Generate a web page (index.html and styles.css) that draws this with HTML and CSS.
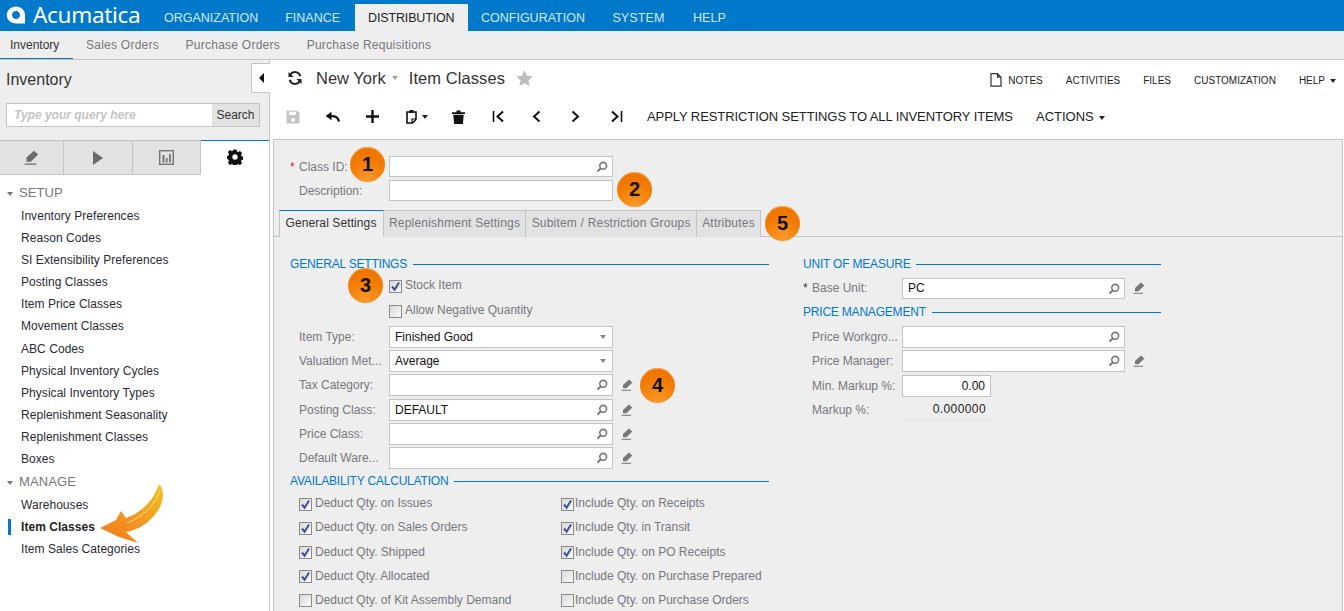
FILE: index.html
```html
<!DOCTYPE html>
<html>
<head>
<meta charset="utf-8">
<title>Item Classes</title>
<link rel="stylesheet" href="styles.css">
</head>
<body>
<svg class="defs" width="0" height="0">
 <defs>
  <symbol id="i-search" viewBox="0 0 12 12"><circle cx="7.2" cy="4.8" r="3.4" fill="none" stroke="currentColor" stroke-width="1.6"/><path d="M4.8 7.2L1.4 10.6" stroke="currentColor" stroke-width="2" fill="none"/></symbol>
  <symbol id="i-pencil" viewBox="0 0 12 12"><path d="M8 .5l3.300 3-5.800 5.800H2V6z" fill="currentColor"/><path d="M.5 11.300h9.500" stroke="currentColor" stroke-width="1" fill="none"/></symbol>
  <symbol id="i-check" viewBox="0 0 11 11"><path d="M2 5.500l2.600 3.200L9 1.400" fill="none" stroke="#3f4f9a" stroke-width="2"/></symbol>
  <linearGradient id="arrow-fill" x1="1" y1="0" x2="0" y2="1"><stop offset="0" stop-color="#f2c21e"/><stop offset=".55" stop-color="#f39422"/><stop offset="1" stop-color="#f07a1c"/></linearGradient>
 </defs>
</svg>

<div class="topbar">
 <div class="logo">
  <svg width="20" height="18" viewBox="0 0 20 18"><path fill-rule="evenodd" d="M10 .5c5 0 9 3.600 9 8.400v8.600H10C4.700 17.500.8 13.700.8 9 .8 4.300 4.800.5 10 .5zM10 5c-2.300 0-4 1.800-4 4s1.700 4 4 4 4-1.800 4-4-1.700-4-4-4z" fill="#fff"/></svg>
  <span class="logo-text">Acumatica</span>
 </div>
 <a class="top-item">ORGANIZATION</a>
 <a class="top-item">FINANCE</a>
 <a class="top-item active">DISTRIBUTION</a>
 <a class="top-item">CONFIGURATION</a>
 <a class="top-item">SYSTEM</a>
 <a class="top-item">HELP</a>
</div>

<div class="subbar">
 <a class="sub-item active">Inventory</a>
 <a class="sub-item">Sales Orders</a>
 <a class="sub-item">Purchase Orders</a>
 <a class="sub-item">Purchase Requisitions</a>
</div>

<div class="body-row">
 <div class="sidebar">
  <div class="side-top">
   <div class="side-title">Inventory</div>
   <div class="side-search">
    <span class="query">Type your query here</span>
    <span class="search-btn">Search</span>
   </div>
  </div>
  <div class="side-tabs">
   <div class="side-tab t1"><svg width="15" height="15" class="ic-gray"><use href="#i-pencil"/></svg></div>
   <div class="side-tab t2"><svg width="12" height="16" viewBox="0 0 12 16"><path d="M1 1l10 7-10 7z" fill="#6b6b6b"/></svg></div>
   <div class="side-tab t3"><svg width="15" height="15" viewBox="0 0 15 15"><rect x=".7" y=".7" width="13.600" height="13.600" fill="none" stroke="#777" stroke-width="1.400"/><path d="M3.500 5h2v7.500h-2zM6.800 8h1.800v4.500H6.800zM10 4h1.800v8.500H10z" fill="#777"/></svg></div>
   <div class="side-tab t4 active"><svg width="16" height="16" viewBox="0 0 16 16"><path fill-rule="evenodd" d="M6.500.5h3l.4 2 1.300.6 1.800-1.100 2.100 2.100-1.100 1.800.6 1.300 1.900.4v3l-1.900.4-.6 1.300 1.100 1.800-2.100 2.100-1.800-1.100-1.300.6-.4 1.800h-3l-.4-1.800-1.300-.6-1.800 1.100L.9 13.500l1.100-1.800-.6-1.300-1.900-.4v-3l1.900-.4.6-1.300L.9 3.100 3 1l1.800 1.100 1.300-.6zM8 5.300a2.700 2.700 0 1 0 0 5.400 2.700 2.700 0 0 0 0-5.400z" fill="#111"/></svg></div>
  </div>
  <div class="tree">
   <div class="tree-head"><i class="caret"></i>SETUP</div>
   <a class="tree-item">Inventory Preferences</a>
   <a class="tree-item">Reason Codes</a>
   <a class="tree-item">SI Extensibility Preferences</a>
   <a class="tree-item">Posting Classes</a>
   <a class="tree-item">Item Price Classes</a>
   <a class="tree-item">Movement Classes</a>
   <a class="tree-item">ABC Codes</a>
   <a class="tree-item">Physical Inventory Cycles</a>
   <a class="tree-item">Physical Inventory Types</a>
   <a class="tree-item">Replenishment Seasonality</a>
   <a class="tree-item">Replenishment Classes</a>
   <a class="tree-item">Boxes</a>
   <div class="tree-head"><i class="caret"></i>MANAGE</div>
   <a class="tree-item">Warehouses</a>
   <a class="tree-item current">Item Classes</a>
   <a class="tree-item">Item Sales Categories</a>
  </div>
 </div>

 <div class="main">
  <div class="title-row">
   <svg class="reload" width="16" height="16" viewBox="0 0 16 16"><path d="M13.300 6.300A5.500 5.500 0 0 0 3.300 4.600M2.700 9.700a5.500 5.500 0 0 0 10 1.700" fill="none" stroke="#222" stroke-width="2"/><path d="M1.500 2v5h5zM14.500 14V9h-5z" fill="#222"/></svg>
   <span class="company">New York</span><i class="caret title-caret"></i>
   <span class="screen">Item Classes</span>
   <svg class="star" width="17" height="16" viewBox="0 0 17 16"><path d="M8.500.5l2.500 5.200 5.600.7-4.100 3.900 1.100 5.700-5.100-2.800-5.100 2.800 1.100-5.700L.4 6.400 6 5.700z" fill="#bdbdbd"/></svg>
   <div class="title-links">
    <svg width="12" height="14" viewBox="0 0 12 14"><path d="M1 .7h6.500L11 4.200v9H1z M7.500.7v3.500H11" fill="none" stroke="#333" stroke-width="1.200"/></svg>
    <a class="link notes">NOTES</a>
    <a class="link">ACTIVITIES</a>
    <a class="link">FILES</a>
    <a class="link">CUSTOMIZATION</a>
    <a class="link">HELP<i class="caret dark"></i></a>
   </div>
  </div>
  <div class="toolbar">
   <svg class="tb t-save" width="14" height="14" viewBox="0 0 14 14"><path fill-rule="evenodd" d="M.5.500h10.500l2.500 2.500v10.500H.5zM3 1.800v3.200h7V1.800zM7 8a2 2 0 1 0 0 4 2 2 0 0 0 0-4z" fill="#c4c4c4"/></svg>
   <svg class="tb t-undo" width="15" height="11" viewBox="0 0 15 11"><path d="M14 10.500C13 6.500 9.500 4.800 5.500 5.300" fill="none" stroke="#111" stroke-width="2.200"/><path d="M6.500.8v8.500L.6 5z" fill="#111"/></svg>
   <svg class="tb t-plus" width="13" height="13" viewBox="0 0 13 13"><path d="M6.500 0v13M0 6.500h13" stroke="#111" stroke-width="2.400" fill="none"/></svg>
   <svg class="tb t-clip" width="11" height="15" viewBox="0 0 11 15"><path d="M1 3h9v7.500L6.500 14H1z" fill="none" stroke="#111" stroke-width="1.600"/><path d="M3.500 1h4v3h-4z" fill="#111"/><path d="M6 14v-4h4" fill="none" stroke="#111" stroke-width="1.200"/></svg>
   <i class="caret dark t-clip-caret"></i>
   <svg class="tb t-del" width="13" height="14" viewBox="0 0 13 14"><path d="M0 2.200h4.500V.6h4v1.600H13v1.700H0zM1.300 4.800h10.400l-.8 9.200H2.100z" fill="#111"/></svg>
   <svg class="tb t-first" width="13" height="13" viewBox="0 0 13 13"><path d="M1.500 1v11" stroke="#111" stroke-width="1.600" fill="none"/><path d="M11 1.500L5.500 6.500l5.500 5" stroke="#111" stroke-width="2" fill="none"/></svg>
   <svg class="tb t-prev" width="9" height="13" viewBox="0 0 9 13"><path d="M7.500 1.500L2 6.500l5.500 5" stroke="#111" stroke-width="2" fill="none"/></svg>
   <svg class="tb t-next" width="9" height="13" viewBox="0 0 9 13"><path d="M1.500 1.500L7 6.500l-5.500 5" stroke="#111" stroke-width="2" fill="none"/></svg>
   <svg class="tb t-last" width="13" height="13" viewBox="0 0 13 13"><path d="M2 1.500l5.500 5-5.500 5" stroke="#111" stroke-width="2" fill="none"/><path d="M11.500 1v11" stroke="#111" stroke-width="1.600" fill="none"/></svg>
   <a class="tb-text apply">APPLY RESTRICTION SETTINGS TO ALL INVENTORY ITEMS</a>
   <a class="tb-text">ACTIONS<i class="caret dark"></i></a>
  </div>

  <div class="panel">
   <div class="head-form">
    <div class="head-row">
     <label class="lbl head-lbl"><b class="req">*</b>Class ID:</label>
     <div class="field short w224"><svg class="mag" width="12" height="12"><use href="#i-search"/></svg></div>
    </div>
    <div class="head-row">
     <label class="lbl head-lbl">Description:</label>
     <div class="field short w224"></div>
    </div>
   </div>
   <div class="tabs">
    <a class="tab active">General Settings</a>
    <a class="tab">Replenishment Settings</a>
    <a class="tab">Subitem / Restriction Groups</a>
    <a class="tab">Attributes</a>
   </div>
   <div class="columns">
    <div class="col-left">
     <div class="sect"><span>GENERAL SETTINGS</span></div>
     <div class="chk-line"><span class="chk on"><svg width="11" height="11"><use href="#i-check"/></svg></span>Stock Item</div>
     <div class="chk-line second"><span class="chk"></span>Allow Negative Quantity</div>
     <div class="rows">
      <div class="row"><label class="lbl">Item Type:</label><div class="field w224">Finished Good<i class="caret sel"></i></div></div>
      <div class="row"><label class="lbl">Valuation Met...</label><div class="field w224">Average<i class="caret sel"></i></div></div>
      <div class="row"><label class="lbl">Tax Category:</label><div class="field w224"><svg class="mag" width="12" height="12"><use href="#i-search"/></svg></div><svg class="pen" width="12" height="12"><use href="#i-pencil"/></svg></div>
      <div class="row"><label class="lbl">Posting Class:</label><div class="field w224">DEFAULT<svg class="mag" width="12" height="12"><use href="#i-search"/></svg></div><svg class="pen" width="12" height="12"><use href="#i-pencil"/></svg></div>
      <div class="row"><label class="lbl">Price Class:</label><div class="field w224"><svg class="mag" width="12" height="12"><use href="#i-search"/></svg></div><svg class="pen" width="12" height="12"><use href="#i-pencil"/></svg></div>
      <div class="row"><label class="lbl">Default Ware...</label><div class="field w224"><svg class="mag" width="12" height="12"><use href="#i-search"/></svg></div><svg class="pen" width="12" height="12"><use href="#i-pencil"/></svg></div>
     </div>
     <div class="sect avail"><span>AVAILABILITY CALCULATION</span></div>
     <div class="avail-grid">
      <div class="av"><span class="chk on"><svg width="11" height="11"><use href="#i-check"/></svg></span>Deduct Qty. on Issues</div>
      <div class="av"><span class="chk on"><svg width="11" height="11"><use href="#i-check"/></svg></span>Include Qty. on Receipts</div>
      <div class="av"><span class="chk on"><svg width="11" height="11"><use href="#i-check"/></svg></span>Deduct Qty. on Sales Orders</div>
      <div class="av"><span class="chk on"><svg width="11" height="11"><use href="#i-check"/></svg></span>Include Qty. in Transit</div>
      <div class="av"><span class="chk on"><svg width="11" height="11"><use href="#i-check"/></svg></span>Deduct Qty. Shipped</div>
      <div class="av"><span class="chk on"><svg width="11" height="11"><use href="#i-check"/></svg></span>Include Qty. on PO Receipts</div>
      <div class="av"><span class="chk on"><svg width="11" height="11"><use href="#i-check"/></svg></span>Deduct Qty. Allocated</div>
      <div class="av"><span class="chk"></span>Include Qty. on Purchase Prepared</div>
      <div class="av"><span class="chk"></span>Deduct Qty. of Kit Assembly Demand</div>
      <div class="av"><span class="chk"></span>Include Qty. on Purchase Orders</div>
     </div>
    </div>
    <div class="col-right">
     <div class="sect"><span>UNIT OF MEASURE</span></div>
     <div class="row r-base"><label class="lbl r-lbl"><b class="req dark">*</b>Base Unit:</label><div class="field short w223">PC<svg class="mag" width="12" height="12"><use href="#i-search"/></svg></div><svg class="pen" width="12" height="12"><use href="#i-pencil"/></svg></div>
     <div class="sect price"><span>PRICE MANAGEMENT</span></div>
     <div class="row"><label class="lbl r-lbl">Price Workgro...</label><div class="field w223"><svg class="mag" width="12" height="12"><use href="#i-search"/></svg></div></div>
     <div class="row"><label class="lbl r-lbl">Price Manager:</label><div class="field w223"><svg class="mag" width="12" height="12"><use href="#i-search"/></svg></div><svg class="pen" width="12" height="12"><use href="#i-pencil"/></svg></div>
     <div class="row"><label class="lbl r-lbl">Min. Markup %:</label><div class="field w89 num">0.00</div></div>
     <div class="row"><label class="lbl r-lbl">Markup %:</label><div class="ro-num">0.000000</div></div>
    </div>
   </div>
  </div>
 </div>
</div>

<div class="collapse"><i class="left-tri"></i></div>
<span class="callout c1">1</span>
<span class="callout c2">2</span>
<span class="callout c3">3</span>
<span class="callout c4">4</span>
<span class="callout c5">5</span>
<svg class="big-arrow" width="70" height="64" viewBox="98 482 70 64">
 <path d="M159 484C165 490 164 502 157 512 149 523 138 530 126 532L138 543 119 537 100 528 116 520 121 511 126 518C138 514 153 503 159 484Z" fill="url(#arrow-fill)"/>
 <path d="M160 490C156 503 146 515 127 523" fill="none" stroke="#fbdc9a" stroke-width="1"/>
</svg>
</body>
</html>
```

FILE: styles.css
```css
* { box-sizing: border-box; }
html, body { height: 100%; }
body {
 margin: 0;
 overflow: hidden;
 position: relative;
 background: #fff;
 font: 12px "Liberation Sans", Arial, sans-serif;
 color: #222;
}
.defs { position: absolute; }
a { display: block; }
i { display: inline-block; }

/* top menu */
.topbar {
 height: 31px;
 background: #0079cb;
 display: flex;
 align-items: flex-end;
 padding-left: 6px;
}
.logo {
 width: 144.500px;
 height: 31px;
 display: flex;
 align-items: center;
 gap: 7px;
}
.logo svg { margin-top: -1px; flex: none; }
.logo-text {
 font-family: "Noto Sans", sans-serif;
 font-size: 22.500px;
 line-height: 28px;
 color: #fff;
 letter-spacing: -.3px;
 margin-top: -2px;
}
.top-item {
 height: 27px;
 line-height: 28px;
 padding: 0 13.500px;
 font-size: 12.500px;
 color: #d5e8f6;
}
.top-item.active {
 background: #eee;
 color: #222;
 margin-left: 1.500px;
 padding: 0 13px;
 letter-spacing: -.15px;
}
.top-item:nth-last-child(2) { margin-left: .5px; letter-spacing: .1px; }
.top-item:last-child { margin-left: 1.500px; letter-spacing: .1px; }

.subbar {
 height: 29px;
 background: #eee;
 border-bottom: 1px solid #c4c4c4;
 display: flex;
}
.sub-item {
 padding: 0 13.300px;
 line-height: 28px;
 letter-spacing: .25px;
 color: #77777c;
}
.sub-item:first-child { padding-left: 10px; letter-spacing: 0; }
.sub-item.active {
 color: #333;
 height: 28px;
 border-bottom: 1px solid #0079cb;
}

.body-row { display: flex; height: 551px; }

/* left side */
.sidebar {
 width: 270px;
 flex: none;
 border-right: 1px solid #c4c4c4;
 background: #fff;
}
.side-top {
 height: 80px;
 background: #eee;
 padding: 10px 9px 0 6px;
}
.side-title {
 font-size: 16px;
 line-height: 19px;
 color: #333;
}
.side-search {
 margin-top: 14px;
 height: 24px;
 display: flex;
 background: #fff;
 border: 1px solid #c4c4c4;
}
.query {
 flex: 1;
 padding-left: 7px;
 line-height: 22px;
 font-style: italic;
 font-weight: bold;
 color: #c4c4c4;
}
.search-btn {
 width: 47px;
 background: #e2e2e2;
 text-align: center;
 line-height: 22px;
 color: #333;
}
.side-tabs {
 display: flex;
 height: 35px;
}
.side-tab {
 display: flex;
 align-items: center;
 justify-content: center;
 background: #e2e2e2;
 border-top: 1px solid #c4c4c4;
 border-bottom: 1px solid #c4c4c4;
 border-right: 1px solid #c4c4c4;
}
.t1 { width: 64px; }
.t2 { width: 69px; }
.t3 { width: 68px; }
.t4 { flex: 1; }
.side-tab.active {
 background: #fff;
 border: 0;
 border-top: 1px solid #0079cb;
 padding-bottom: 3px;
}
.ic-gray { color: #6b6b6b; }

.tree { padding-top: 7px; }
.tree-head {
 height: 23px;
 line-height: 22px;
 font-size: 13px;
 letter-spacing: .1px;
 color: #77777c;
 padding-left: 7px;
}
.tree-item + .tree-head { margin-top: 1px; }
.caret {
 width: 0;
 height: 0;
 border-left: 3.500px solid transparent;
 border-right: 3.500px solid transparent;
 border-top: 4px solid #77777c;
 vertical-align: 1px;
 margin-right: 6px;
}
.tree-item {
 height: 22.100px;
 line-height: 22px;
 padding-left: 21px;
 letter-spacing: .05px;
 color: #2a2a33;
}
.tree-item.current { font-weight: bold; color: #222; position: relative; }
.tree-item.current::before {
 content: "";
 position: absolute;
 left: 8px;
 top: 3px;
 width: 3px;
 height: 16px;
 background: #0079cb;
}

/* main area */
.main { flex: 1; min-width: 0; }
.title-row {
 height: 40px;
 display: flex;
 align-items: center;
 padding: 0 8px 4px 17px;
}
.reload { margin: -1px 13px 0 0; }
.company, .screen { font-size: 16.500px; color: #333; }
.screen { letter-spacing: .08px; }
.title-caret { margin: 0 11px 0 6px; border-top-color: #a0a0a0; }
.star { margin-left: 11px; margin-top: -1px; }
.title-links {
 margin-left: auto;
 display: flex;
 align-items: center;
 font-size: 10px;
 color: #222;
 padding-top: 4px;
}
.link { margin-left: 23px; }
.link.notes { margin-left: 6px; }
.caret.dark { border-top-color: #222; margin: 0 0 0 5px; }
.toolbar {
 height: 39px;
 display: flex;
 align-items: center;
 padding-bottom: 6px;
}
.tb { flex: none; }
.t-save { margin-left: 16px; }
.t-undo { margin-left: 25px; }
.t-plus { margin-left: 26px; }
.t-clip { margin-left: 27px; }
.t-clip-caret.dark { margin-left: 5px; }
.t-del { margin-left: 24px; }
.t-first { margin-left: 27px; }
.t-prev { margin-left: 27px; }
.t-next { margin-left: 30px; }
.t-last { margin-left: 30px; }
.tb-text { font-size: 13px; color: #222; white-space: nowrap; }
.apply { margin-left: 24px; margin-right: 23px; letter-spacing: -.08px; }

.panel {
 margin: 0 1px 0 3px;
 height: 472px;
 background: #eee;
 border: 1px solid #c4c4c4;
 border-bottom: 0;
 overflow: hidden;
}
.head-form { padding: 16px 0 0 16px; height: 70px; }
.head-row { display: flex; align-items: center; height: 24px; margin-top: -1px; }
.head-row + .head-row { margin-top: 0; }
.head-row .field { margin-top: -1px; }
.lbl {
 color: #77777c;
 white-space: nowrap;
 display: block;
}
.head-lbl { width: 99px; position: relative; padding-left: 9px; }
.req {
 position: absolute;
 left: 0;
 top: 0;
 color: #d22;
 font-weight: normal;
}
.req.dark { color: #333; left: 0; }
.field {
 position: relative;
 height: 22px;
 flex: none;
 background: #fff;
 border: 1px solid #c4c4c4;
 line-height: 20px;
 padding-left: 5px;
 color: #111;
}
.field.short { height: 21px; line-height: 18px; }
.w224 { width: 224px; }
.w223 { width: 223px; }
.w89 { width: 89px; }
.num { text-align: right; padding-right: 5px; }
.mag {
 position: absolute;
 right: 4px;
 top: 4px;
 color: #777;
}
.pen { color: #777; margin-left: 8px; flex: none; }
.sel {
 position: absolute;
 right: 6px;
 top: 8px;
 margin: 0;
 border-top-color: #888;
}

.tabs {
 display: flex;
 height: 27px;
 padding-left: 5px;
 border-bottom: 1px solid #c4c4c4;
}
.tab {
 height: 27px;
 line-height: 24px;
 padding: 0 5px 0 5.500px;
 letter-spacing: .2px;
 background: #e2e2e2;
 color: #77777c;
 border-right: 1px solid #c4c4c4;
 border-top: 1px solid #c4c4c4;
}
.tab.active {
 background: #eee;
 color: #333;
 letter-spacing: .1px;
 padding-right: 6px;
 border-top: 1px solid #0079cb;
 border-left: 1px solid #c4c4c4;
}
.columns { display: flex; padding: 18px 0 0 16px; }
.col-left { width: 479px; margin-right: 34px; }
.col-right { width: 358px; }
.sect {
 height: 18px;
 display: flex;
 align-items: center;
 color: #0079cb;
 line-height: 18px;
 letter-spacing: -.2px;
}
.sect::after {
 content: "";
 flex: 1;
 height: 1px;
 background: #0079cb;
 margin-left: 6px;
 margin-top: 1px;
}
.sect.avail { margin-top: 2px; }
.sect.price { margin-top: 3px; margin-bottom: 4px; }
.chk-line {
 display: flex;
 align-items: center;
 height: 24px;
 padding-left: 99px;
 color: #77777c;
}
.chk-line.second { margin-top: 1px; }
.chk {
 width: 13px;
 height: 13px;
 flex: none;
 border: 1px solid #8a8a8a;
 background: linear-gradient(135deg, #d8d8d8, #fafafa);
 margin: 2px 3px 0 0;
 display: flex;
 align-items: center;
 justify-content: center;
}
.rows { margin-top: 3px; }
.row {
 display: flex;
 align-items: center;
 height: 24.200px;
}
.rows .lbl { width: 99px; padding-left: 9px; overflow: hidden; }
.r-lbl { width: 99px; padding-left: 9px; position: relative; }
.r-base { margin-top: 3px; }
.ro-num {
 width: 89px;
 text-align: right;
 padding-right: 5px;
 line-height: 22px;
 letter-spacing: .4px;
 color: #222;
 border-bottom: 1px dotted #ddd;
}
.avail-grid {
 display: grid;
 grid-template-columns: 262px 1fr;
 grid-auto-rows: 24.200px;
 padding: 1px 0 0 9px;
}
.av {
 display: flex;
 align-items: center;
 color: #77777c;
 white-space: nowrap;
}
.av:nth-child(even) .chk { margin-right: 1px; }

/* things laid over the page */
.collapse {
 position: absolute;
 left: 251px;
 top: 63px;
 width: 19px;
 height: 30px;
 background: #fff;
 border: 1px solid #c4c4c4;
 border-right: 0;
 display: flex;
 align-items: center;
 justify-content: center;
}
.left-tri {
 width: 0;
 height: 0;
 border-top: 5px solid transparent;
 border-bottom: 5px solid transparent;
 border-right: 5px solid #111;
}
.callout {
 position: absolute;
 width: 35px;
 height: 35px;
 border-radius: 50%;
 background: radial-gradient(circle at 50% 100%, #fb9a30 0, #f27a00 60%, #ea7200 100%);
 box-shadow: inset 0 1px 1px #f9b060;
 color: #111;
 font-size: 20px;
 font-weight: bold;
 text-align: center;
 line-height: 35px;
}
.c1 { left: 350px; top: 147px; }
.c2 { left: 617px; top: 172px; }
.c3 { left: 348px; top: 268px; }
.c4 { left: 640px; top: 368px; }
.c5 { left: 765px; top: 206px; }
.big-arrow { position: absolute; left: 98px; top: 482px; }
```
